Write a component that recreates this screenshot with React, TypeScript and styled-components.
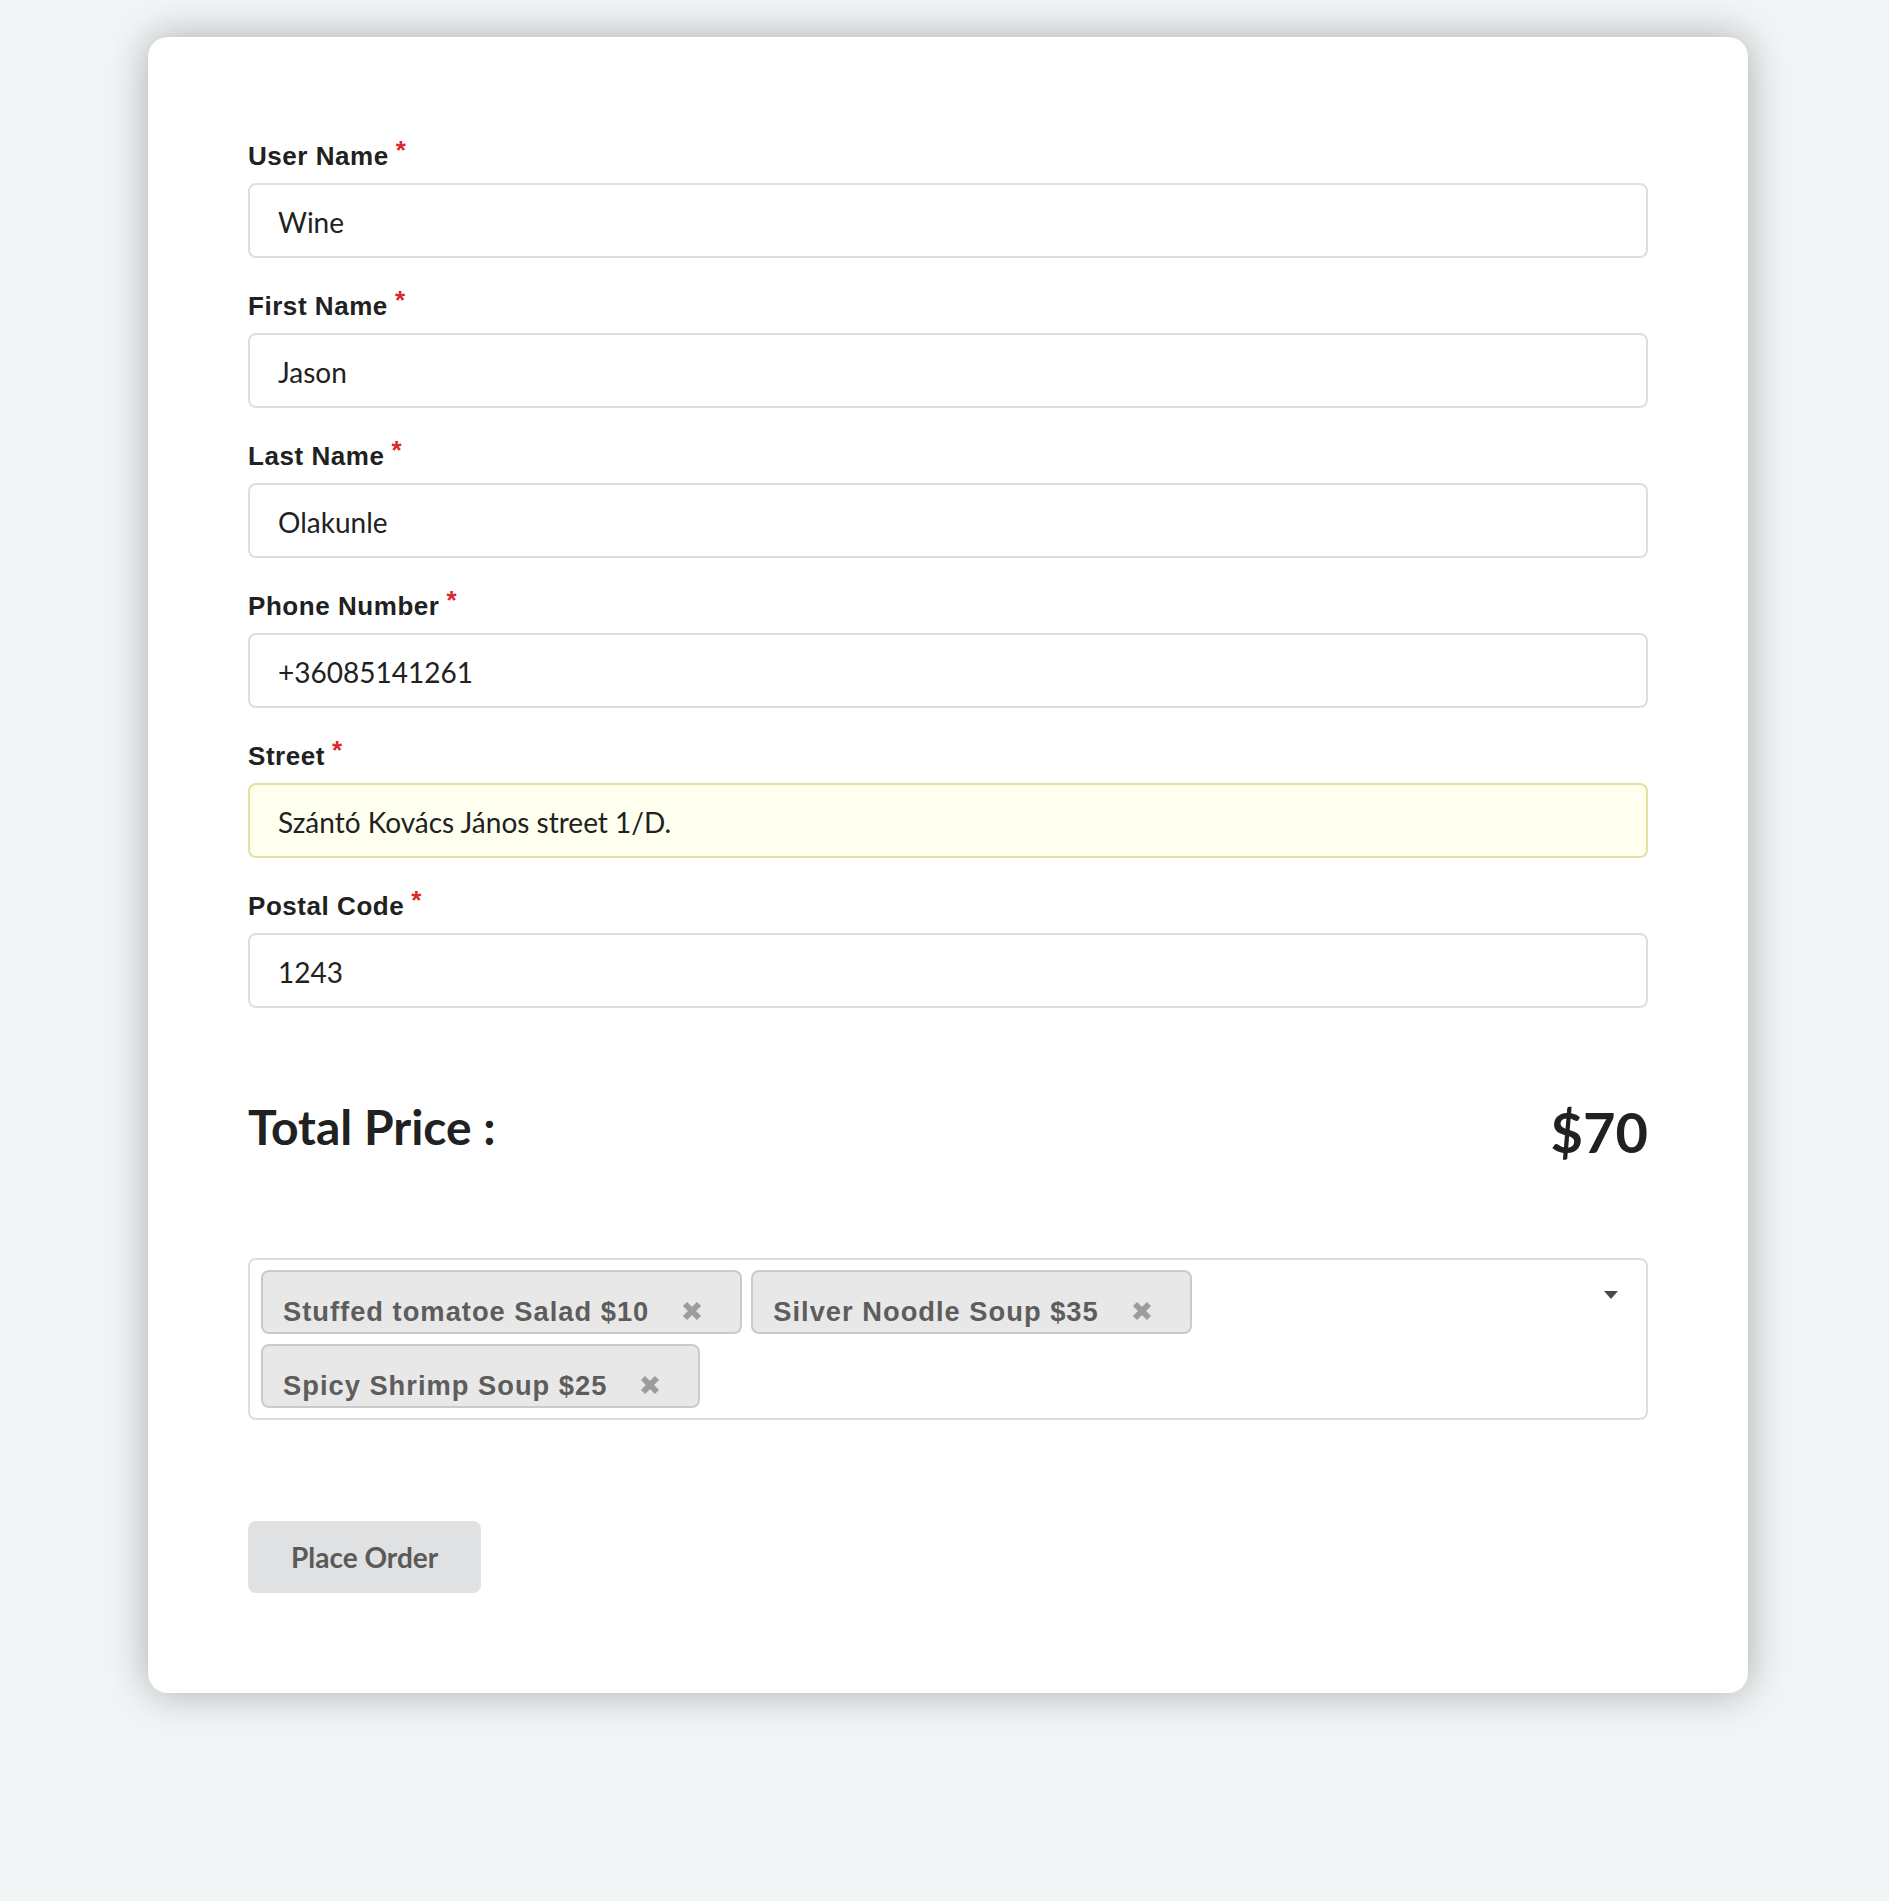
import React from "react";
import styled, { createGlobalStyle } from "styled-components";

const GlobalStyle = createGlobalStyle`
  html, body {
    margin: 0;
    padding: 0;
    background: #f2f5f6;
  }
  * { box-sizing: border-box; }
`;

const Page = styled.div`
  padding: 37px 0 200px 148px;
  min-height: 1901px;
  background: #f2f5f6;
`;

const Card = styled.div`
  width: 1600px;
  padding: 100px;
  background: #ffffff;
  border-radius: 20px;
  box-shadow: 0 0 40px 0 rgba(0, 0, 0, 0.3);
`;

const Field = styled.div`
  display: flex;
  flex-direction: column;
  margin-bottom: 29px;
`;

const Label = styled.label`
  font-family: "Liberation Sans", Arial, sans-serif;
  font-weight: 700;
  font-size: 26px;
  letter-spacing: 0.55px;
  line-height: 37px;
  padding-top: 1px;
  color: #212121;
  margin-bottom: 8px;
`;

const Star = styled.span`
  display: inline-block;
  position: relative;
  top: -6px;
  margin-left: 7px;
  color: #db2828;
`;

const Input = styled.input<{ $autofill?: boolean }>`
  width: 100%;
  height: 75px;
  padding: 2px 28px 0;
  border: 2px solid ${(p) => (p.$autofill ? "#e5dfa1" : "#dedede")};
  background: ${(p) => (p.$autofill ? "#fffff0" : "#ffffff")};
  border-radius: 8px;
  font-family: "Lato", "Liberation Sans", sans-serif;
  font-size: 28px;
  color: #212121;
  outline: none;
`;

const PriceRow = styled.div`
  display: flex;
  justify-content: space-between;
  align-items: flex-start;
  margin-top: 88px;
`;

const PriceTitle = styled.h2`
  margin: 0;
  font-family: "Lato", sans-serif;
  font-weight: 700;
  font-size: 48px;
  line-height: 61.7px;
  color: #212121;
`;

const PriceValue = styled.h1`
  margin: 0;
  font-family: "Lato", sans-serif;
  font-weight: 700;
  font-size: 56px;
  line-height: 72px;
  color: #212121;
`;

const Dropdown = styled.div`
  display: flex;
  align-items: flex-start;
  margin-top: 90px;
  padding: 10px 28px 0 11px;
  border: 2px solid #dedede;
  border-radius: 8px;
  background: #ffffff;
`;

const ChipList = styled.div`
  flex: 1;
  display: flex;
  flex-wrap: wrap;
  align-content: flex-start;
`;

const Chip = styled.span`
  display: inline-flex;
  align-items: flex-start;
  height: 64px;
  padding: 26px 38px 0 20px;
  margin: 0 9px 10px 0;
  background: #e8e8e8;
  border: 2px solid #cacaca;
  border-radius: 8px;
  font-family: "Liberation Sans", Arial, sans-serif;
  font-weight: 700;
  font-size: 27.3px;
  letter-spacing: 1px;
  line-height: 1;
  color: #5d5d5d;
  white-space: nowrap;
`;

const DeleteIcon = styled.svg`
  flex: none;
  margin-left: 33px;
  margin-top: 3px;
`;

const Caret = styled.svg`
  flex: none;
  margin-top: 21px;
  margin-left: 12px;
`;

const Actions = styled.div`
  display: flex;
  margin-top: 101px;
`;

const Button = styled.button`
  padding: 22px 43px;
  border: none;
  border-radius: 8px;
  background: #e0e1e2;
  color: #5a5a5a;
  font-family: "Lato", sans-serif;
  font-weight: 700;
  font-size: 28px;
  line-height: 28px;
  cursor: pointer;
`;

const fields = [
  { label: "User Name", value: "Wine" },
  { label: "First Name", value: "Jason" },
  { label: "Last Name", value: "Olakunle" },
  { label: "Phone Number", value: "+36085141261" },
  { label: "Street", value: "Szántó Kovács János street 1/D.", autofill: true },
  { label: "Postal Code", value: "1243" },
];

const items = [
  "Stuffed tomatoe Salad $10",
  "Silver Noodle Soup $35",
  "Spicy Shrimp Soup $25",
];

const Cross = () => (
  <DeleteIcon width="20" height="20" viewBox="0 0 20 20">
    <path
      d="M3 3 L17 17 M17 3 L3 17"
      stroke="#9d9d9d"
      strokeWidth="6"
      strokeLinecap="butt"
      fill="none"
    />
  </DeleteIcon>
);

export default function App() {
  return (
    <>
      <GlobalStyle />
      <Page>
        <Card>
          {fields.map((f) => (
            <Field key={f.label}>
              <Label>
                {f.label}
                <Star>*</Star>
              </Label>
              <Input value={f.value} readOnly $autofill={f.autofill} />
            </Field>
          ))}
          <PriceRow>
            <PriceTitle>Total Price :</PriceTitle>
            <PriceValue>$70</PriceValue>
          </PriceRow>
          <Dropdown>
            <ChipList>
              {items.map((it) => (
                <Chip key={it}>
                  {it}
                  <Cross />
                </Chip>
              ))}
            </ChipList>
            <Caret width="14" height="9" viewBox="0 0 14 9">
              <path d="M0 0 L14 0 L7 8 Z" fill="#4a4a4a" />
            </Caret>
          </Dropdown>
          <Actions>
            <Button>Place Order</Button>
          </Actions>
        </Card>
      </Page>
    </>
  );
}
